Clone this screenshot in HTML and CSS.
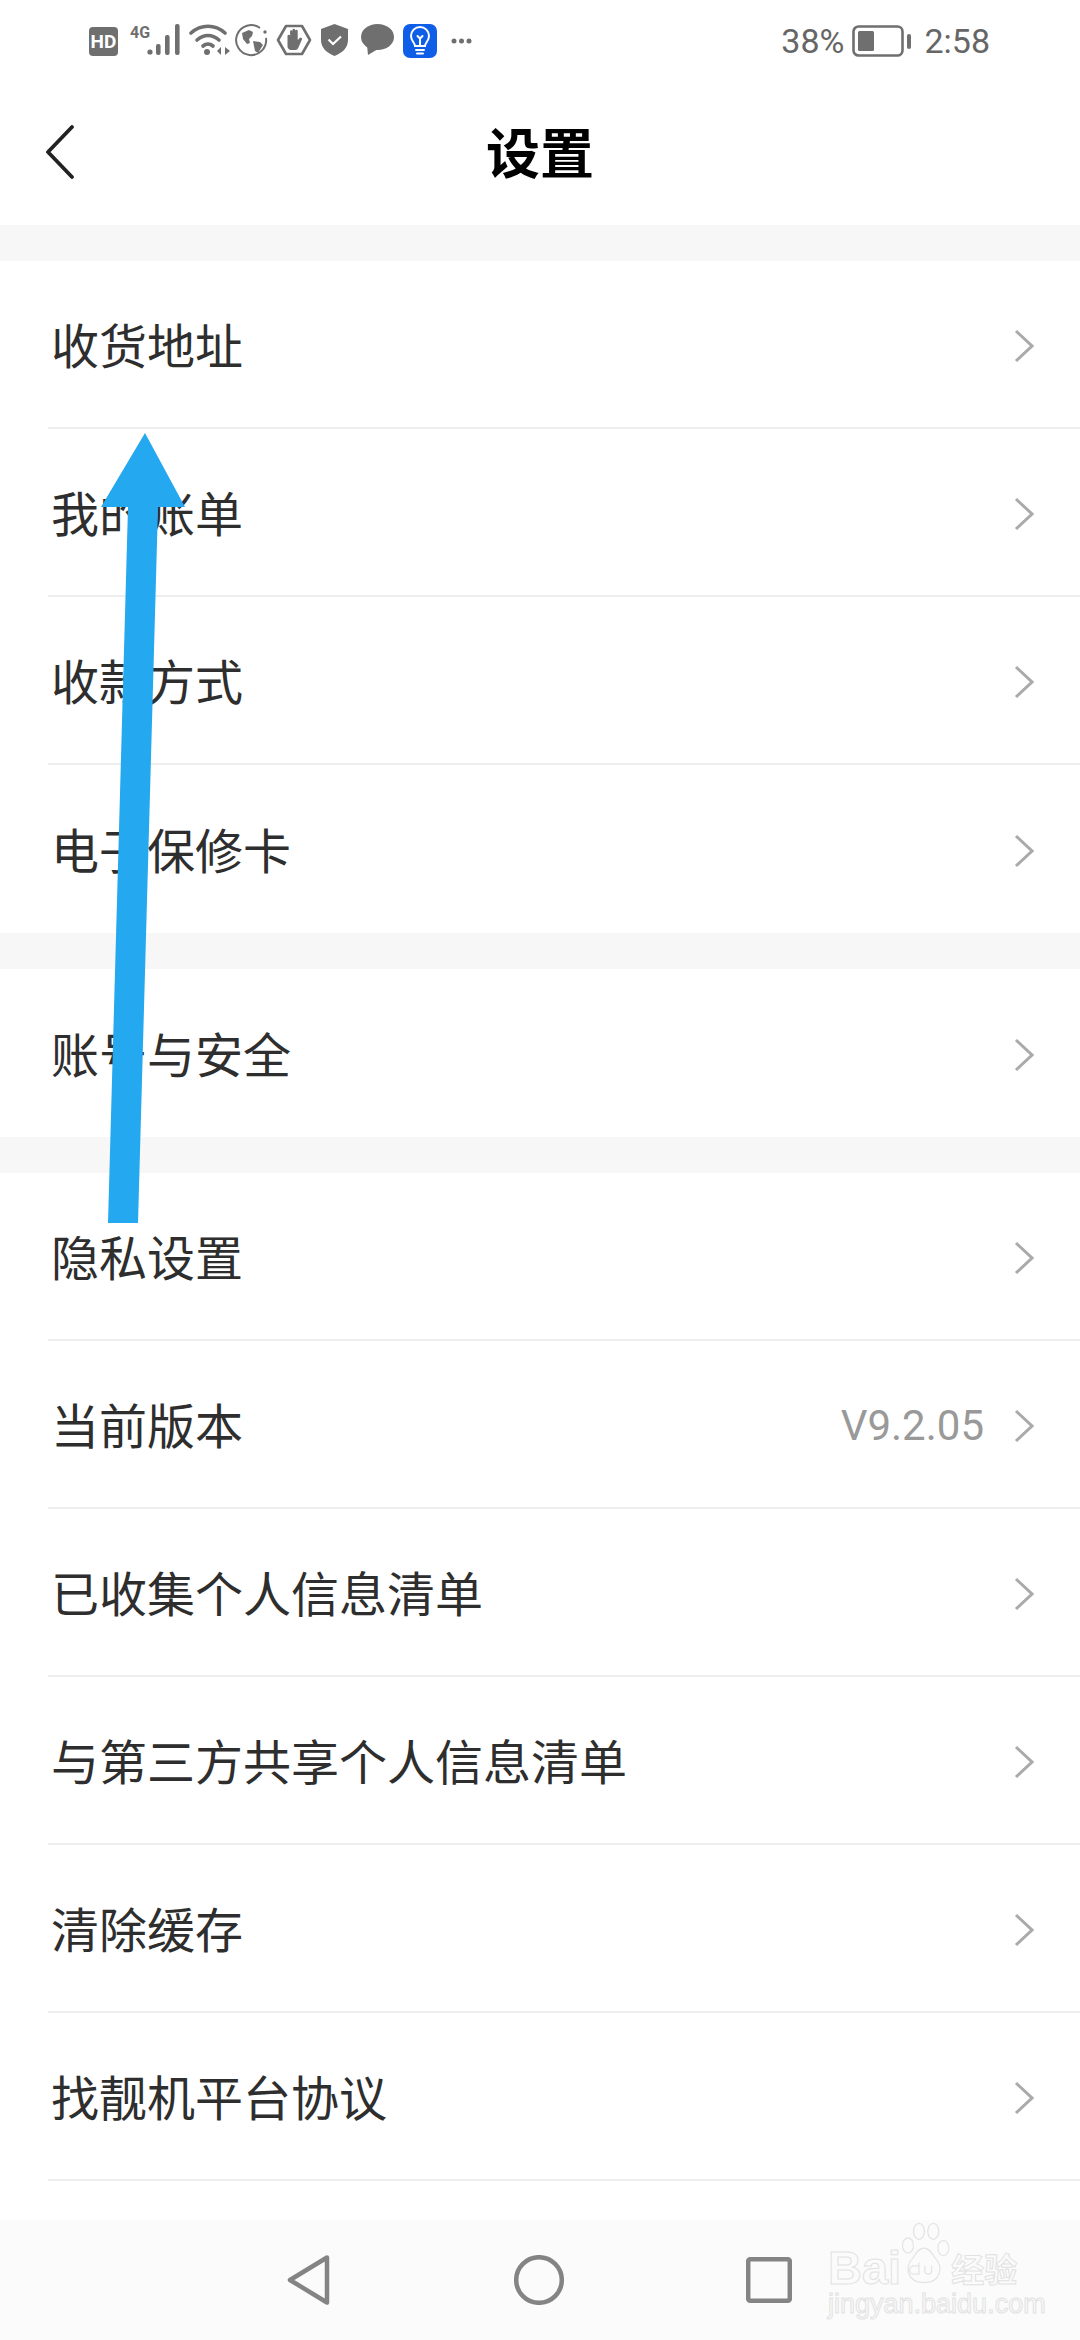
FILE: index.html
```html
<!DOCTYPE html>
<html lang="zh-CN">
<head>
<meta charset="utf-8">
<title>设置</title>
<link rel="stylesheet" href="styles.css">
</head>
<body>
<div class="page">
  <div class="status">
    <span class="hd">HD</span>
    <span class="g4">4G</span>
    <svg class="si w-sig" viewBox="17 0 33 32"><g fill="#6f6f6f"><circle cx="20" cy="28" r="2.6"/><rect x="26" y="20" width="4.6" height="11" rx="2"/><rect x="35" y="11" width="4.6" height="20" rx="2"/><rect x="45" y="0" width="4.6" height="31" rx="2"/></g></svg>
    <svg class="si w-wifi" viewBox="0 0 44 32"><g fill="none" stroke="#6f6f6f" stroke-width="3.6" stroke-linecap="round"><path d="M2 9C12 0 26 0 36 9"/><path d="M8 16C15 10 23 10 30 16"/><path d="M14 22C17 19.500 21 19.500 24 22"/></g><circle cx="18" cy="28" r="3" fill="#6f6f6f"/><path d="M32 23v8l-4-4zM36 23v8l5-4z" fill="#6f6f6f"/></svg>
    <svg class="si w-globe" viewBox="0 0 34 34"><path d="M25 4A15 15 0 1 0 31 14" fill="none" stroke="#6f6f6f" stroke-width="2"/><circle cx="30" cy="8" r="1.700" fill="#6f6f6f"/><path d="M7 9l7-3 4 2-1 4-3 3 1 4-3 1-4-5zM18 17l7 1 3 3-5 8-3-2-1-5z" fill="#6f6f6f"/></svg>
    <svg class="si w-hand" viewBox="0 0 36 32"><path d="M10 2h16l8 14-8 14H10L2 16z" fill="none" stroke="#6f6f6f" stroke-width="2.600" stroke-linejoin="round"/><path d="M11.500 12a1.300 1.300 0 0 1 2.600 0V7a1.300 1.300 0 0 1 2.400 0V6a1.300 1.300 0 0 1 2.600 0v1a1.300 1.300 0 0 1 2.600 0v9l2-2a1.400 1.400 0 0 1 2 2l-3.500 8a3 3 0 0 1-3 2h-4a4 4 0 0 1-3.700-4z" fill="#6f6f6f"/></svg>
    <svg class="si w-shield" viewBox="0 0 27 32"><path d="M13.500 0L27 5v11c0 8-6 13-13.500 16C6 29 0 24 0 16V5z" fill="#6f6f6f"/><path d="M7.500 15.500l4.500 4.500 8-7.500" fill="none" stroke="#fff" stroke-width="2.200"/></svg>
    <svg class="si w-chat" viewBox="0 0 33 32"><ellipse cx="16.500" cy="13" rx="16.500" ry="13" fill="#6f6f6f"/><path d="M6 21l1 10 10-6z" fill="#6f6f6f"/></svg>
    <svg class="si w-bulb" viewBox="0 0 34 34"><rect width="34" height="34" rx="7" fill="#0f5ee8"/><g fill="none" stroke="#fff" stroke-width="2" stroke-linecap="round"><path d="M12 22c0-3-4-5-4-10a9 9 0 0 1 18 0c0 5-4 7-4 10z"/><path d="M13 26h8M14 29.500h6"/><path d="M14.500 12l2.500 2.500 2.500-2.500M17 14.500V22"/></g></svg>
    <svg class="si w-dots" viewBox="0 0 21 6"><g fill="#6f6f6f"><circle cx="3" cy="3" r="2.500"/><circle cx="10.500" cy="3" r="2.500"/><circle cx="18" cy="3" r="2.500"/></g></svg>
    <span class="status-space"></span>
    <span class="st-text">38%</span>
    <svg class="si w-batt" viewBox="0 0 60 32"><rect x="1.500" y="1.500" width="49" height="29" rx="5" fill="none" stroke="#6f6f6f" stroke-width="2.600"/><rect x="6" y="6" width="16" height="20" rx="1.500" fill="#6f6f6f"/><rect x="55" y="9" width="4" height="15" rx="2" fill="#6f6f6f"/></svg>
    <span class="st-text st-time">2:58</span>
  </div>

  <header class="topbar">
    <svg class="back" viewBox="0 0 30 54"><path d="M27 2L3 27l24 25" fill="none" stroke="#222" stroke-width="3.800" stroke-linecap="round" stroke-linejoin="round"/></svg>
    <h1 class="title">设置</h1>
  </header>

  <div class="band"></div>
  <section class="group">
    <div class="row"><span class="label">收货地址</span><svg class="chev" viewBox="0 0 20 34"><path d="M2 2l16 15L2 32"/></svg></div>
    <div class="row"><span class="label">我的账单</span><svg class="chev" viewBox="0 0 20 34"><path d="M2 2l16 15L2 32"/></svg></div>
    <div class="row"><span class="label">收款方式</span><svg class="chev" viewBox="0 0 20 34"><path d="M2 2l16 15L2 32"/></svg></div>
    <div class="row"><span class="label">电子保修卡</span><svg class="chev" viewBox="0 0 20 34"><path d="M2 2l16 15L2 32"/></svg></div>
  </section>
  <div class="band"></div>
  <section class="group">
    <div class="row"><span class="label">账号与安全</span><svg class="chev" viewBox="0 0 20 34"><path d="M2 2l16 15L2 32"/></svg></div>
  </section>
  <div class="band"></div>
  <section class="group">
    <div class="row"><span class="label">隐私设置</span><svg class="chev" viewBox="0 0 20 34"><path d="M2 2l16 15L2 32"/></svg></div>
    <div class="row"><span class="label">当前版本</span><span class="value">V9.2.05</span><svg class="chev" viewBox="0 0 20 34"><path d="M2 2l16 15L2 32"/></svg></div>
    <div class="row"><span class="label">已收集个人信息清单</span><svg class="chev" viewBox="0 0 20 34"><path d="M2 2l16 15L2 32"/></svg></div>
    <div class="row"><span class="label">与第三方共享个人信息清单</span><svg class="chev" viewBox="0 0 20 34"><path d="M2 2l16 15L2 32"/></svg></div>
    <div class="row"><span class="label">清除缓存</span><svg class="chev" viewBox="0 0 20 34"><path d="M2 2l16 15L2 32"/></svg></div>
    <div class="row row-lined"><span class="label">找靓机平台协议</span><svg class="chev" viewBox="0 0 20 34"><path d="M2 2l16 15L2 32"/></svg></div>
  </section>

  <span class="grow"></span>

  <nav class="navbar">
    <svg class="nav-back" viewBox="0 0 44 50"><path d="M40 2.500L3 25l0 0 37 22.500z" fill="none" stroke="#848484" stroke-width="4.500" stroke-linejoin="round"/></svg>
    <svg class="nav-home" viewBox="0 0 50 50"><circle cx="25" cy="25" r="22.800" fill="none" stroke="#848484" stroke-width="4.500"/></svg>
    <svg class="nav-recent" viewBox="0 0 46 46"><rect x="2.200" y="2.200" width="41.600" height="41.600" rx="2" fill="none" stroke="#848484" stroke-width="4.500"/></svg>
  </nav>

  <svg class="arrow" viewBox="0 0 1080 2340"><polygon points="145,433 185,507 158,507 138,1223 108,1223 128,507 101,507" fill="#24a8f0"/></svg>

  <div class="mark">
    <div class="mark-top">
      <span class="mark-bai">Bai</span>
      <span class="mark-pawbox">
        <svg class="mark-paw" viewBox="0 0 60 76"><g fill="none" stroke="#e4e4e4" stroke-width="1.500"><ellipse cx="11" cy="28" rx="6.500" ry="9"/><ellipse cx="24" cy="11" rx="6.500" ry="9.500"/><ellipse cx="41" cy="11" rx="6.500" ry="9.500"/><ellipse cx="53" cy="31" rx="6.500" ry="9"/><path d="M30 31c8 0 10 9 15 14 7 7 6 27-15 27S8 52 15 45c5-5 7-14 15-14z"/><path d="M24 48v14h-6a5 5 0 0 1 0-10h6M31 52v6a4 4 0 0 0 8 0v-6"/></g></svg>
      </span>
      <span class="mark-cn">经验</span>
    </div>
    <div class="mark-url">jingyan.baidu.com</div>
  </div>
</div>
</body>
</html>
```
FILE: styles.css
```css
* { box-sizing: border-box; }
html, body { margin: 0; padding: 0; }
body { background: #fff; font-family: "Noto Sans CJK SC", "Noto Sans", sans-serif; }

.page {
  position: relative;
  width: 1080px;
  height: 2340px;
  display: flex;
  flex-direction: column;
  overflow: hidden;
}

.status {
  height: 82px;
  padding: 24px 90px 0 89px;
  display: flex;
  align-items: flex-start;
  gap: 9px;
  flex: none;
}
.si { display: block; flex: none; }
.hd {
  width: 29px;
  height: 29px;
  margin: 3px 3px 0 0;
  flex: none;
  border-radius: 4px;
  background: #6f6f6f;
  color: #fff;
  font: 700 19px/29px Roboto, sans-serif;
  text-align: center;
}
.g4 {
  width: 18px;
  margin: 1px -10px 0 0;
  flex: none;
  color: #6f6f6f;
  font: 700 16px/16px "Liberation Sans Narrow", Roboto, sans-serif;
}
.w-sig { width: 33px; height: 32px; }
.w-wifi { width: 44px; height: 32px; }
.w-globe { width: 34px; height: 34px; margin-left: -7px; }
.w-hand { width: 36px; height: 32px; margin-left: -2px; }
.w-shield { width: 27px; height: 32px; margin-left: 0; }
.w-chat { width: 33px; height: 32px; margin-left: 4px; }
.w-bulb { width: 34px; height: 34px; }
.w-dots { width: 21px; height: 6px; margin: 14px 0 0 5px; }
.status-space { flex: 1; }
.st-text { font-family: Roboto, sans-serif; font-size: 34px; line-height: 42px; color: #666; margin-top: -4px; }
.w-batt { width: 60px; height: 32px; margin: 1px 0 0 -1px; }
.st-time { margin-left: 3px; }

.topbar {
  height: 143px;
  flex: none;
  position: relative;
  display: flex;
  align-items: center;
  justify-content: center;
}
.back { position: absolute; left: 45px; top: 43px; width: 30px; height: 54px; }
.title { margin: -6px 0 0; font-size: 54px; font-weight: 700; line-height: 72px; color: #000; }

.band { height: 36px; flex: none; background: #f7f7f7; }
.group { flex: none; }
.row {
  height: 168px;
  margin-left: 48px;
  padding-left: 5px;
  padding-right: 46px;
  display: flex;
  align-items: center;
  border-bottom: 2px solid #eeeeee;
}
.row:last-child { border-bottom: 0; }
.row.row-lined { border-bottom: 2px solid #eeeeee; }
.label { font-size: 48px; line-height: 64px; color: #2e2e2e; flex: 1; margin: -2px 0 0 -2px; }
.value { font-family: Roboto, sans-serif; font-size: 42px; line-height: 50px; color: #999; margin: 4px 30px 0 0; }
.chev { width: 20px; height: 34px; flex: none; fill: none; stroke: #aaa; stroke-width: 3; margin-top: 4px; }

.grow { flex: 1; }
.navbar {
  height: 120px;
  flex: none;
  background: #fbfbfb;
  position: relative;
  display: flex;
  align-items: center;
  padding: 0 288px 0 287px;
  justify-content: space-between;
}
.nav-back { width: 44px; height: 50px; }
.nav-home { width: 50px; height: 50px; }
.nav-recent { width: 46px; height: 46px; }

.arrow { position: absolute; left: 0; top: 0; width: 1080px; height: 2340px; pointer-events: none; }

.mark { position: absolute; left: 828px; top: 2224px; width: 200px; }
.mark-top { display: flex; align-items: flex-end; height: 62px; }
.mark-bai, .mark-cn, .mark-url {
  color: transparent;
  -webkit-text-stroke: 1px #e2e2e2;
}
.mark-bai { font: 700 47px/36px "Liberation Sans", sans-serif; }
.mark-pawbox { display: block; width: 52px; height: 64px; flex: none; margin: -2px 0 0 -3px; }
.mark-paw { display: block; width: 52px; height: 64px; }
.mark-cn { font: 700 33px/36px "Noto Sans CJK SC", sans-serif; margin-left: 1px; }
.mark-url { font: 400 27px/24px "Liberation Sans", sans-serif; white-space: nowrap; margin-top: 6px; }
```
